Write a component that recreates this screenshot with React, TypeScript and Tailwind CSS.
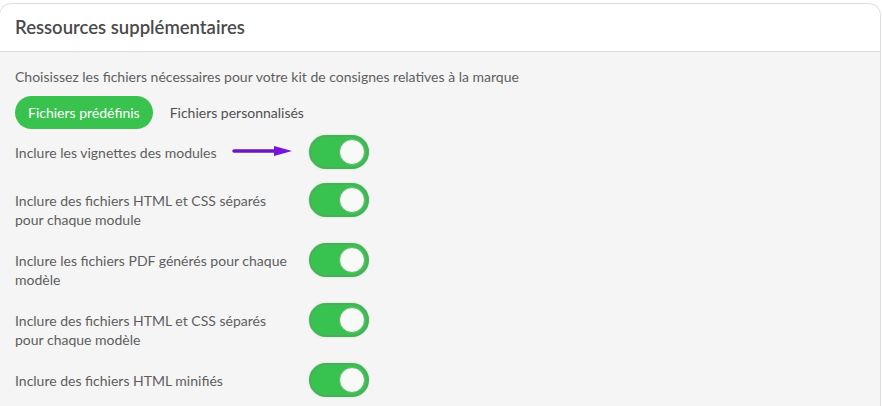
import React from "react";

function Toggle() {
  return (
    <div className="relative shrink-0 w-[60px] h-[34px] rounded-full bg-[#38c24f] border-[2px] border-[#4cae5c] shadow-[0_0_2px_rgba(80,220,100,0.5)]">
      <div className="absolute right-[2px] top-[2px] w-[26px] h-[26px] rounded-full bg-[#f8faf8] border border-[#5cb86a]" />
    </div>
  );
}

function Row({ children, arrow }: { children: React.ReactNode; arrow?: boolean }) {
  return (
    <div className="relative flex items-start">
      <div className="w-[294px] pt-[8px] text-[14px] leading-[19px] text-[#5e5e5e]">{children}</div>
      {arrow && (
        <svg className="absolute left-[217px] top-[9px]" width="62" height="14" viewBox="0 0 62 14">
          <line x1="2" y1="7" x2="44" y2="7" stroke="#6818bf" strokeWidth="3.5" strokeLinecap="round" />
          <polygon points="42,2 60,7 42,12" fill="#7812dc" />
        </svg>
      )}
      <Toggle />
    </div>
  );
}

export default function App() {
  return (
    <div className="w-[883px] h-[406px] bg-white overflow-hidden" style={{ fontFamily: "Lato, 'Open Sans', sans-serif" }}>
      <div className="mt-[3px] ml-[-1px] w-[882px] h-[420px] border border-[#dddddd] rounded-t-[12px] bg-[#f5f5f5]">
        <div className="h-[48px] bg-white rounded-t-[12px] border-b border-[#dcdcdc] flex items-center pl-[15px]">
          <span className="text-[18.5px] font-semibold text-[#4a4a4a]">Ressources supplémentaires</span>
        </div>
        <div className="pl-[15px] pt-[15px]">
          <div className="text-[14px] leading-[19px] text-[#606060]">
            Choisissez les fichiers nécessaires pour votre kit de consignes relatives à la marque
          </div>
          <div className="mt-[10px] flex items-center">
            <div className="h-[33px] px-[13px] rounded-full bg-[#3ac24f] text-white text-[14px] flex items-center">
              Fichiers prédéfinis
            </div>
            <div className="ml-[17px] text-[14px] text-[#505050]">Fichiers personnalisés</div>
          </div>
          <div className="mt-[6px] flex flex-col gap-[14px]">
            <Row arrow>Inclure les vignettes des modules</Row>
            <Row>
              Inclure des fichiers HTML et CSS séparés
              <br />
              pour chaque module
            </Row>
            <Row>
              Inclure les fichiers PDF générés pour chaque
              <br />
              modèle
            </Row>
            <Row>
              Inclure des fichiers HTML et CSS séparés
              <br />
              pour chaque modèle
            </Row>
            <Row>Inclure des fichiers HTML minifiés</Row>
          </div>
        </div>
      </div>
    </div>
  );
}
